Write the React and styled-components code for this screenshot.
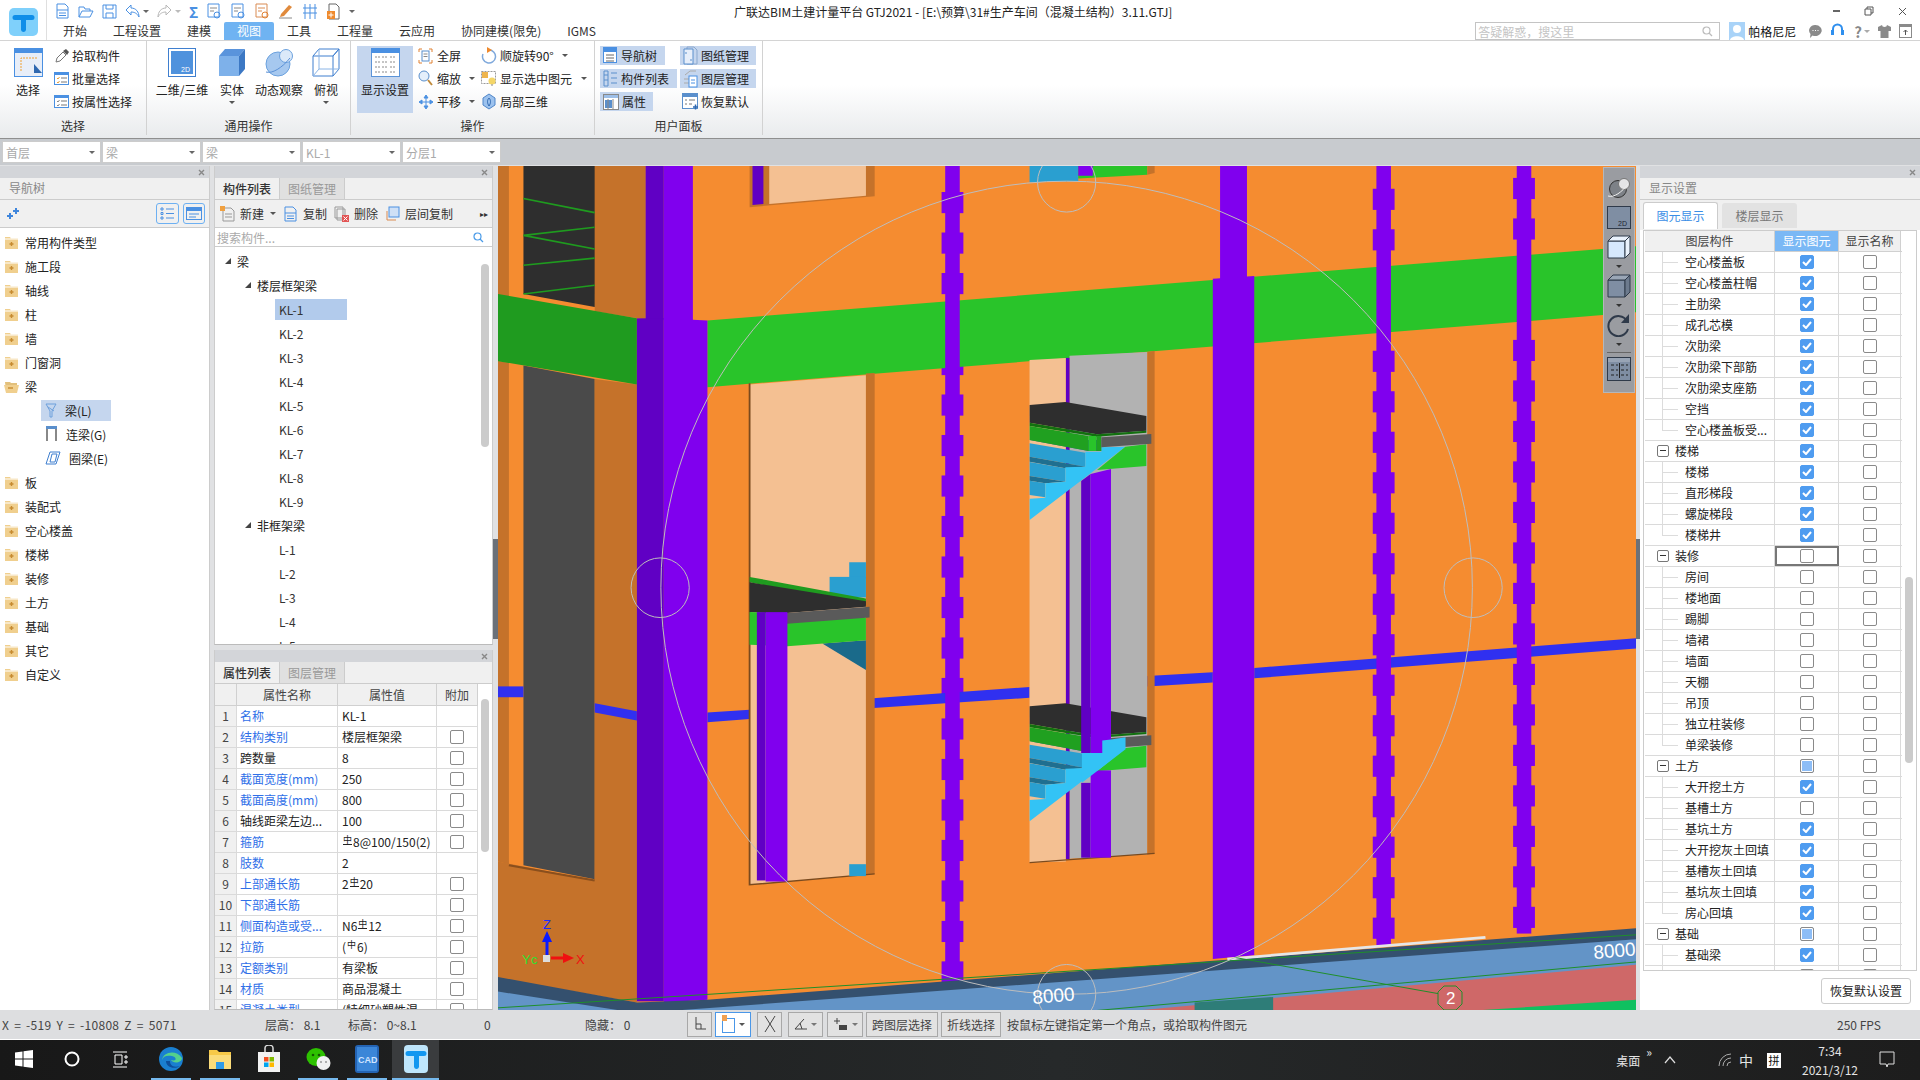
import React from 'react'
import styled, { createGlobalStyle } from 'styled-components'

const Global = createGlobalStyle`
    html, body { margin: 0; padding: 0; width: 1920px; height: 1080px; overflow: hidden; }
    body { font-family: "Noto Sans CJK SC", "Liberation Sans", sans-serif; font-size: 12px; color: #222; }
    * { box-sizing: border-box; }
`

const Page = styled.div`
    width: 1920px;
    height: 1080px;
    display: flex;
    flex-direction: column;
    background: #e0e1e3;
    overflow: hidden;
`

/* ---------- header ---------- */
const Header = styled.div`
    height: 41px;
    flex: none;
    display: flex;
    background: #fff;
    border-bottom: 1px solid #d4d4d4;
`
const LogoCell = styled.div`
    width: 47px;
    flex: none;
    padding: 8px 0 0 9px;
    border-right: 1px solid #dfdfdf;
`
const HeadRight = styled.div`
    flex: 1;
    display: flex;
    flex-direction: column;
`
const TitleRow = styled.div`
    height: 22px;
    display: grid;
    grid-template-columns: 687px auto 1fr;
    align-items: center;
`
const Quick = styled.div`
    display: flex;
    align-items: center;
    padding-left: 8px;
    gap: 8px;
`
const Title = styled.div`
    font-size: 12px;
    color: #222;
    white-space: nowrap;
`
const WinBtns = styled.div`
    display: flex;
    justify-content: flex-end;
    gap: 24px;
    padding-right: 13px;
    align-items: center;
    color: #555;
`
const TabRow = styled.div`
    height: 18px;
    display: flex;
    padding-left: 3px;
`
const Tab = styled.div`
    padding: 0 13px;
    line-height: 18px;
    color: ${p => (p.$on ? '#fff' : '#333')};
    background: ${p => (p.$on ? '#6fb3f2' : 'transparent')};
    border-radius: 2px 2px 0 0;
    white-space: nowrap;
`
const HeadTools = styled.div`
    margin-left: auto;
    display: flex;
    align-items: center;
    gap: 8px;
    padding-right: 8px;
`
const Search = styled.div`
    width: 245px;
    height: 18px;
    border: 1px solid #c4c4c4;
    display: flex;
    align-items: center;
    justify-content: space-between;
    padding: 0 6px 0 2px;
    color: #c4c4c4;
    margin-right: 1px;
`
const UserName = styled.span`
    color: #111;
    margin: 0 4px 0 -5px;
`

/* ---------- ribbon ---------- */
const Ribbon = styled.div`
    height: 98px;
    flex: none;
    display: flex;
    background: linear-gradient(#fff 0, #fff 45%, #e9ebed 100%);
    border-bottom: 1px solid #8f8f8f;
`
const Group = styled.div`
    width: ${p => p.$w}px;
    flex: none;
    display: flex;
    flex-direction: column;
    margin-bottom: 3px;
    border-right: 1px solid #d2d2d2;
`
const GroupBody = styled.div`
    flex: 1;
    display: flex;
    padding: 5px 0 0 ${p => p.$pl || 0}px;
`
const GroupLabel = styled.div`
    height: 19px;
    line-height: 20px;
    text-align: center;
    color: #333;
`
const LargeBtn = styled.div`
    width: ${p => p.$w}px;
    height: 67px;
    flex: none;
    display: flex;
    flex-direction: column;
    align-items: center;
    padding-top: 2px;
    background: ${p => (p.$on ? '#c5d6ee' : 'transparent')};
    span { line-height: 16px; margin-top: 5px; white-space: nowrap; color: #222; }
`
const SmallCol = styled.div`
    width: ${p => p.$w}px;
    margin-left: ${p => p.$ml || 0}px;
    flex: none;
    display: flex;
    flex-direction: column;
    gap: 4px;
`
const SmallBtn = styled.div`
    height: 19px;
    width: ${p => (p.$w ? `${p.$w}px` : 'auto')};
    display: flex;
    align-items: center;
    gap: 3px;
    white-space: nowrap;
    padding-left: ${p => p.$pl || 0}px;
    background: ${p => (p.$on ? '#c5d6ee' : 'transparent')};
`
const Caret = styled.i`
    display: inline-block;
    flex: none;
    width: 0;
    height: 0;
    margin-left: ${p => p.$ml || 0}px;
    border-left: 3px solid transparent;
    border-right: 3px solid transparent;
    border-top: 3px solid ${p => p.$c || '#555'};
`
const LargeCaret = styled(Caret)`
    margin-top: 3px;
`

/* ---------- selector bar ---------- */
const DropBar = styled.div`
    height: 26px;
    flex: none;
    display: flex;
    gap: 1px;
    padding: 2px 0 0 2px;
    background: #c8cbcf;
`
const Drop = styled.div`
    width: 99px;
    height: 22px;
    background: #fff;
    border: 1px solid #ccc;
    color: #aaa;
    display: flex;
    align-items: center;
    justify-content: space-between;
    padding: 0 5px 0 3px;
    font-size: 12px;
`

/* ---------- main ---------- */
const Main = styled.div`
    height: 845px;
    flex: none;
    display: flex;
    padding-top: 1px;
    background: #e0e1e3;
`
const NavPanel = styled.div`
    width: 210px;
    margin-right: 4px;
    flex: none;
    display: flex;
    flex-direction: column;
    background: #fff;
    border-right: 1px solid #ccc;
`
const MidCol = styled.div`
    width: 279px;
    flex: none;
    display: flex;
    flex-direction: column;
    gap: 5px;
`
const Panel = styled.div`
    height: ${p => p.$h}px;
    flex: none;
    display: flex;
    flex-direction: column;
    background: #fff;
    position: relative;
    overflow: hidden;
    border-bottom: 1px solid #bbb;
    border-right: 1px solid #ccc;
    border-left: 1px solid #ccc;
`
const Strip = styled.div`
    height: 12px;
    flex: none;
    background: #d3d5d9;
    display: flex;
    justify-content: flex-end;
    align-items: center;
    padding-right: 4px;
`
const PanelTitle = styled.div`
    height: 22px;
    flex: none;
    line-height: 20px;
    padding-left: 9px;
    color: #888;
    background: #f0f0f0;
    border-bottom: 1px solid #ccc;
`
const TabsBar = styled.div`
    height: 22px;
    flex: none;
    display: flex;
    background: #f0f0f0;
    border-bottom: 1px solid #ccc;
`
const PanelTab = styled.div`
    width: 65px;
    text-align: center;
    line-height: 21px;
    font-weight: ${p => (p.$on ? 500 : 400)};
    color: ${p => (p.$on ? '#333' : '#999')};
    background: ${p => (p.$on ? '#f0f0f0' : '#e0e0e0')};
    border-right: 1px solid #ccc;
`
const Toolbar = styled.div`
    height: 28px;
    flex: none;
    display: flex;
    align-items: center;
    background: #f0f0f0;
    border-bottom: 1px solid #ccc;
    padding: 0 4px 0 ${p => p.$pl || 7}px;
    gap: ${p => p.$gap || 0}px;
`
const ToolBtn = styled.div`
    display: flex;
    align-items: center;
    gap: 5px;
    color: #333;
    white-space: nowrap;
`
const MoreArrows = styled.span`
    margin-left: auto;
    font-size: 8px;
    color: #333;
`
const NavSwitch = styled.div`
    width: 24px;
    height: 21px;
    border: 1px solid #6db0f2;
    border-radius: 3px;
    display: flex;
    align-items: center;
    justify-content: center;
    margin-left: ${p => p.$ml || 0}px;
`
const NavTree = styled.div`
    flex: 1;
    padding-top: 2px;
    overflow: hidden;
`
const NavRow = styled.div`
    height: 24px;
    display: flex;
    align-items: center;
    gap: 6px;
    padding-left: 4px;
    color: #222;
`
const NavChild = styled.div`
    height: 24px;
    display: flex;
    align-items: center;
    margin-left: 41px;
`
const NavChildInner = styled.div`
    height: 21px;
    width: 70px;
    display: flex;
    align-items: center;
    gap: 8px;
    padding-left: 4px;
    color: #222;
    background: ${p => (p.$on ? '#c5d6ee' : 'transparent')};
`
const SearchRow = styled.div`
    height: 19px;
    flex: none;
    display: flex;
    align-items: center;
    justify-content: space-between;
    padding: 0 8px 0 2px;
    border-bottom: 1px solid #ccc;
    color: #aaa;
`
const CompTree = styled.div`
    flex: 1;
    padding-top: 2px;
    overflow: hidden;
`
const CompRow = styled.div`
    height: 24px;
    display: flex;
    align-items: center;
    padding-left: ${p => p.$pl}px;
    color: #222;
`
const LeafLabel = styled.div`
    width: 72px;
    height: 21px;
    line-height: 21px;
    padding-left: 4px;
    font-size: 12px;
    color: #333;
    background: ${p => (p.$on ? '#b2cbec' : 'transparent')};
`
const TreeArrow = styled.i`
    width: 0;
    height: 0;
    margin-right: 6px;
    border-bottom: 6px solid #444;
    border-left: 6px solid transparent;
`
const ScrollThumb = styled.div`
    position: absolute;
    right: ${p => p.$r}px;
    top: ${p => p.$t}px;
    width: 8px;
    height: ${p => p.$h}px;
    background: #cbcbcb;
    border-radius: 4px;
`
const Splitter = styled.div`
    width: ${p => p.$w}px;
    flex: none;
    padding-top: 373px;
`
const SplitHandle = styled.div`
    height: 100px;
    background: #6b7179;
`

/* ---------- attribute table ---------- */
const AttrHead = styled.div`
    display: grid;
    grid-template-columns: 22px 101px 99px 41px;
    height: 22px;
    width: 263px;
    flex: none;
    background: #f0f0f0;
    border-bottom: 1px solid #d0d0d0;
    div { text-align: center; line-height: 21px; border-right: 1px solid #d0d0d0; color: #444; }
`
const AttrRow = styled.div`
    display: grid;
    grid-template-columns: 22px 101px 99px 41px;
    height: 21px;
    width: 263px;
    flex: none;
    border-bottom: 1px solid #dadada;
`
const NumCell = styled.div`
    background: #f0f0f0;
    border-right: 1px solid #dadada;
    text-align: center;
    line-height: 20px;
    color: #444;
`
const NameCell = styled.div`
    border-right: 1px solid #dadada;
    padding-left: 3px;
    line-height: 20px;
    white-space: nowrap;
    overflow: hidden;
    color: ${p => (p.$blue ? '#2f6fe8' : '#222')};
`
const ValueCell = styled.div`
    border-right: 1px solid #dadada;
    padding-left: 4px;
    line-height: 20px;
    white-space: nowrap;
    overflow: hidden;
    color: #222;
`
const CheckCell = styled.div`
    border-right: 1px solid #dadada;
    display: flex;
    align-items: center;
    justify-content: center;
`
const Rebar = styled.span`
    display: inline-block;
    font-size: 9px;
    line-height: 9px;
    vertical-align: 4px;
    margin: 0 1px;
    border-bottom: ${p => (p.$plain ? '0' : '1px solid #222')};
`
const Box = styled.div`
    width: 14px;
    height: 14px;
    border: 1px solid ${p => (p.$state === 1 ? '#4f9cf0' : '#8a8a8a')};
    border-radius: 2px;
    background: ${p => (p.$state === 1 ? '#4f9cf0' : p.$state === 2 ? '#8dbdf6' : '#fff')};
    box-shadow: ${p => (p.$state === 2 ? 'inset 0 0 0 1px #fff' : 'none')};
    display: flex;
    align-items: center;
    justify-content: center;
`

/* ---------- viewport ---------- */
const Viewport = styled.div`
    width: 1138px;
    flex: none;
    position: relative;
    overflow: hidden;
    background: #f58c30;
`
const SceneSvg = styled.svg`
    display: block;
    width: 100%;
    height: 100%;
`
const SceneLabels = styled.svg`
    position: absolute;
    inset: 0;
    width: 100%;
    height: 100%;
    font-family: "Liberation Sans", sans-serif;
`
const FloatBar = styled.div`
    position: absolute;
    top: 1px;
    right: 1px;
    width: 32px;
    height: 226px;
    background: #9a9ca1;
    border: 1px solid #b5b7ba;
    display: flex;
    flex-direction: column;
    align-items: center;
    padding-top: 10px;
`
const FloatCaret = styled(Caret)`
    margin: 6px 0;
`
const FloatGap = styled.div`
    height: ${p => p.$h}px;
    flex: none;
`
const FloatRule = styled.div`
    width: 24px;
    height: 1px;
    background: #666;
    margin: 0 0 4px;
`

/* ---------- display settings panel ---------- */
const RightPanel = styled.div`
    width: 280px;
    flex: none;
    display: flex;
    flex-direction: column;
    background: #fff;
`
const RightTabs = styled.div`
    height: 30px;
    flex: none;
    display: flex;
    align-items: flex-end;
    gap: 4px;
    padding: 0 0 1px 3px;
    background: #f0f0f0;
`
const RightTab = styled.div`
    width: 75px;
    height: ${p => (p.$on ? 27 : 25)}px;
    margin-bottom: ${p => (p.$on ? 0 : 1)}px;
    line-height: 25px;
    text-align: center;
    border-radius: 3px 3px 0 0;
    color: ${p => (p.$on ? '#3a8ee6' : '#777')};
    background: ${p => (p.$on ? '#fff' : '#e2e2e2')};
    border: ${p => (p.$on ? '1px solid #ccc' : '0')};
    border-bottom: 0;
`
const LayerTable = styled.div`
    height: 741px;
    flex: none;
    margin: 0 3px;
    border: 1px solid #ccc;
    overflow: hidden;
    position: relative;
    background: #fff;
`
const LayerHead = styled.div`
    display: grid;
    grid-template-columns: 130px 64px 62px;
    height: 21px;
    margin-left: 1px;
    width: 257px;
    border-bottom: 1px solid #d0d0d0;
`
const HeadCell = styled.div`
    text-align: center;
    line-height: 20px;
    color: ${p => (p.$on ? '#fff' : '#444')};
    background: ${p => (p.$on ? '#7ab8f5' : '#f0f0f0')};
    border-right: 1px solid #d0d0d0;
`
const LayerRow = styled.div`
    display: grid;
    grid-template-columns: 130px 64px 62px;
    height: 21px;
    margin-left: 1px;
    width: 257px;
    border-bottom: 1px solid #dadada;
`
const LayerName = styled.div`
    position: relative;
    border-right: 1px solid #dadada;
    line-height: 20px;
    padding-left: ${p => (p.$group ? 30 : 40)}px;
    white-space: nowrap;
    color: #222;
    &::before {
        content: '';
        position: absolute;
        left: 17px;
        top: 0;
        bottom: ${p => (p.$last ? '10px' : '-1px')};
        border-left: 1px solid #dcdcdc;
        display: ${p => (p.$group ? 'none' : 'block')};
    }
    &::after {
        content: '';
        position: absolute;
        left: 17px;
        width: 16px;
        top: 10px;
        border-top: 1px solid #dcdcdc;
        display: ${p => (p.$group ? 'none' : 'block')};
    }
`
const Collapse = styled.i`
    position: absolute;
    left: 12px;
    top: 4px;
    width: 12px;
    height: 12px;
    border: 1px solid #777;
    border-radius: 2px;
    font-style: normal;
    &::after {
        content: '';
        position: absolute;
        left: 2px;
        right: 2px;
        top: 4px;
        border-top: 1px solid #333;
    }
`
const LayerCheck = styled.div`
    border-right: 1px solid #dadada;
    display: flex;
    align-items: center;
    justify-content: center;
    outline: ${p => (p.$focus ? '2px solid #777' : '0')};
    outline-offset: -2px;
`
const PanelFoot = styled.div`
    flex: 1;
    display: flex;
    justify-content: flex-end;
    padding: 7px 9px 0 0;
`
const ResetBtn = styled.div`
    width: 90px;
    height: 26px;
    border: 1px solid #ccc;
    border-radius: 3px;
    text-align: center;
    line-height: 24px;
    color: #222;
`

/* ---------- status + taskbar ---------- */
const StatusBar = styled.div`
    height: 30px;
    flex: none;
    display: flex;
    align-items: center;
    background: #dddee0;
    border-bottom: 1px solid #fff;
    color: #444;
    padding-bottom: 1px;
`
const StatusText = styled.div`
    width: ${p => p.$w}px;
    flex: none;
    padding-left: ${p => p.$pl || 0}px;
    white-space: nowrap;
`
const CoordText = styled(StatusText)`
    word-spacing: 2px;
    letter-spacing: .3px;
`
const StatusBtn = styled.div`
    width: ${p => p.$w}px;
    height: 25px;
    flex: none;
    margin-right: ${p => p.$mr ?? 3}px;
    background: ${p => (p.$on ? '#fff' : '#e2e2e2')};
    border: 1px solid ${p => (p.$on ? '#4a97e8' : '#a8a8a8')};
    display: flex;
    align-items: center;
    justify-content: center;
    gap: 3px;
    color: #444;
`
const Taskbar = styled.div`
    height: 40px;
    flex: none;
    display: flex;
    align-items: center;
    background: linear-gradient(90deg, #181818, #26292a 55%, #1d1d1d);
    color: #e4e4e4;
`
const TaskItem = styled.div`
    width: ${p => p.$w}px;
    height: 40px;
    flex: none;
    margin-left: ${p => p.$ml || 0}px;
    display: flex;
    align-items: center;
    justify-content: center;
    background: ${p => (p.$on ? '#3a3c3e' : 'transparent')};
    border-bottom: 2px solid ${p => (p.$run ? '#76b9ed' : 'transparent')};
`
const Tray = styled.div`
    margin-left: auto;
    display: flex;
    align-items: center;
    color: #e4e4e4;
`
const TrayText = styled.span`
    margin-right: ${p => p.$mr || 0}px;
    margin-left: ${p => p.$ml || 0}px;
    margin-top: ${p => p.$mt || 0}px;
    font-size: ${p => p.$fs || 12}px;
    white-space: nowrap;
`
const TraySpace = styled.div`
    width: ${p => p.$w}px;
    flex: none;
`
const PinYin = styled.span`
    background: #fff;
    color: #111;
    width: 14px;
    height: 15px;
    line-height: 15px;
    text-align: center;
    margin-right: 18px;
    font-size: 11px;
`
const Clock = styled.div`
    width: 62px;
    text-align: center;
    line-height: 19px;
    margin-right: 18px;
`
const Sigma = styled.span`
    color: #4a90e2;
    font-size: 15px;
    font-weight: 700;
    line-height: 15px;
`
const HelpMark = styled.span`
    color: #888;
    font-size: 15px;
    font-weight: 700;
    line-height: 15px;
    margin-left: 2px;
`
const MinBar = styled.span`
    width: 7px;
    height: 2px;
    background: #666;
`
const BtnText = styled.span`
    margin-left: ${p => p.$ml || 0}px;
`

/* ---------- icons ---------- */
const Svg = ({ w = 16, h = 16, children, vb }) => (
    <svg width={w} height={h} viewBox={vb || `0 0 ${w} ${h}`} style={{ flex: 'none', display: 'block' }} fill="none">{children}</svg>
)
const B = '#4a90e2'

const Logo = () => (
    <Svg w={29} h={28}>
        <rect width="29" height="28" rx="5" fill="#7fd0fb" />
        <path d="M6 7h17a2 2 0 0 1 0 5h-6v10a2.6 2.6 0 0 1-5 0V12H6a2.5 2.5 0 0 1 0-5z" fill="#0f8ee8" />
    </Svg>
)
const PageIc = ({ c = B }) => (
    <Svg w={15} h={16}><path d="M2 1h8l3 3v11H2z M2 7h11 M4 10h7 M4 12.5h7" stroke={c} /></Svg>
)
const NewIc = () => (
    <Svg w={15} h={16}><path d="M3 2h8l3 3v10H3z M5 8h7 M5 11h7" stroke="#999" /><rect x="0" y="0" width="5" height="5" fill="#f0a040" /></Svg>
)
const DeleteIc = () => (
    <Svg w={15} h={16}><path d="M1 1h8v11H1z M3 3h8v11H3z" stroke="#999" /><rect x="8" y="9" width="7" height="7" fill="#e25555" /><path d="M9.500 10.500l4 4 M13.500 10.500l-4 4" stroke="#fff" /></Svg>
)
const FolderOpenIc = () => (
    <Svg w={16} h={15}><path d="M1 13V3h5l1 2h5v2 M1 13l3-6h11l-3 6z" stroke={B} /></Svg>
)
const SaveIc = () => (
    <Svg w={15} h={15}><path d="M1 1h13v13H1z M4 1v4h7V1 M4 14V9h7v5" stroke={B} /></Svg>
)
const UndoIc = ({ flip, c = B }) => (
    <Svg w={15} h={14}><path d={flip ? 'M9 1l5 5-5 5V8C6 8 3 9 1 13 1 8 4 4 9 4z' : 'M6 1L1 6l5 5V8c3 0 6 1 8 5 0-5-3-9-8-9z'} stroke={c} /></Svg>
)
const DocTool = ({ kind }) => (
    <Svg w={16} h={17}>
        <path d="M2 1h11v13H2z" stroke={kind === 'red' ? '#d98b52' : B} />
        <path d="M4 5h7 M4 8h4" stroke={kind === 'red' ? '#d98b52' : '#888'} />
        <circle cx="11" cy="12" r="3" stroke={kind === 'red' ? '#e08030' : B} />
    </Svg>
)
const PenIc = () => (
    <Svg w={16} h={16}><path d="M3 11L11 2l3 2-8 9-4 1z" fill="#e08a3c" /><path d="M1 15h13" stroke="#888" /></Svg>
)
const GridIc = () => (
    <Svg w={16} h={17}><path d="M1 5h14 M1 10h14 M3 1v15 M8 1v15 M13 1v15" stroke={B} /></Svg>
)
const AddDocIc = () => (
    <Svg w={15} h={17}><path d="M3 1h7l3 3v12H3z" stroke="#666" /><rect x="1" y="8" width="8" height="8" fill="#ef8a2d" /><path d="M5 9.5v5 M2.5 12h5" stroke="#fff" /></Svg>
)
const SelectIc = () => (
    <Svg w={29} h={29}>
        <rect x=".5" y=".5" width="28" height="28" fill="#e8eef8" stroke={B} />
        <rect x="0" y="0" width="29" height="5" fill={B} />
        <path d="M7 23V10h16" stroke="#f0a030" strokeDasharray="2 1" />
        <path d="M20 16l8 9h-8z" fill="#2f68b0" />
    </Svg>
)
const PickIc = () => (
    <Svg w={15} h={16}><path d="M2 14l1-4 6-6 3 3-6 6z" stroke="#777" /><path d="M9 3l3-2 3 3-2 3z" fill="#555" /></Svg>
)
const ListIc = ({ c = '#e9a13a' }) => (
    <Svg w={15} h={15}>
        <rect x=".5" y="1.5" width="14" height="12" fill="#fff" stroke={B} />
        <rect x="0" y="1" width="15" height="3" fill={B} />
        <path d="M3 7l1 1 1.5-2 M3 11l1 1 1.5-2" stroke={c} />
        <path d="M7 7h6 M7 11h6" stroke="#777" />
    </Svg>
)
const TwoDIc = () => (
    <Svg w={28} h={29}>
        <rect x=".5" y=".5" width="27" height="28" fill="#fff" stroke="#3f7fcf" />
        <rect x="3" y="3" width="22" height="23" fill="#4f92dd" />
        <text x="13" y="24" fontSize="7" fill="#fff" fontFamily="Liberation Sans">2D</text>
    </Svg>
)
const SolidIc = () => (
    <Svg w={28} h={29}>
        <path d="M1 8h20v20H1z" fill="#7eb1ea" />
        <path d="M1 8l6-7h20l-6 7z" fill="#5a94dc" />
        <path d="M21 8l6-7v20l-6 7z" fill="#3c78c4" />
    </Svg>
)
const OrbitIc = () => (
    <Svg w={30} h={29}>
        <circle cx="14" cy="16" r="12" fill="#a6c8ef" stroke="#6ba1de" />
        <circle cx="22" cy="8" r="6.5" fill="#dbe9f9" stroke="#6ba1de" />
        <path d="M2 24c6 2 16-4 24-14" stroke="#5a90d6" />
    </Svg>
)
const WireIc = () => (
    <Svg w={28} h={29}>
        <path d="M1 8h20v20H1z M1 8l6-7h20l-6 7 M21 8l6-7v20l-6 7" stroke="#3f7fcf" fill="none" />
        <path d="M7 1v20h20 M7 21l-6 7" stroke="#8ab4e6" />
    </Svg>
)
const DisplayIc = () => (
    <Svg w={29} h={29}>
        <rect x=".5" y=".5" width="28" height="28" fill="#fff" stroke="#5b94d8" />
        <rect width="29" height="5" fill="#4a90e2" />
        {[9, 14, 19, 24].map(y => <path key={y} d={`M4 ${y}h5 M11 ${y}h5 M19 ${y}h6`} stroke="#8a8a8a" strokeDasharray="2 1" />)}
    </Svg>
)
const FullIc = () => (
    <Svg w={15} h={16}>
        <path d="M1 4V1h3 M11 1h3v3 M14 12v3h-3 M4 15H1v-3" stroke="#e08030" />
        <rect x="4" y="3" width="7" height="10" stroke="#5a8fcc" />
        <path d="M5.5 6h4 M5.5 8.5h4" stroke="#888" />
    </Svg>
)
const ZoomIc = () => (
    <Svg w={15} h={17}><circle cx="6" cy="6" r="5" fill="#e4effb" stroke="#5a8fcc" /><path d="M10 10l4 5" stroke="#c08a3c" strokeWidth="2" /></Svg>
)
const PanIc = () => (
    <Svg w={16} h={16}><path d="M8 1l2 3H6z M8 15l-2-3h4z M1 8l3-2v4z M15 8l-3 2V6z M8 4v8 M4 8h8" fill={B} stroke={B} /></Svg>
)
const RotateIc = () => (
    <Svg w={16} h={17}><path d="M8 3a6.5 6.5 0 1 1-6 4" stroke="#7fa9dc" strokeWidth="1.5" /><path d="M6 0l5 3-5 3z" fill="#ef8a2d" /></Svg>
)
const ShowSelIc = () => (
    <Svg w={16} h={16}><rect x=".5" y=".5" width="14" height="12" stroke="#999" strokeDasharray="2 1" /><rect x="1" y="1" width="6" height="6" fill="#eeb54e" /><circle cx="11" cy="10" r="3.5" fill="#f4d668" /><path d="M10 14h2" stroke="#888" /></Svg>
)
const LocalIc = () => (
    <Svg w={16} h={17}><path d="M8 1l6 4v7l-6 4-6-4V5z" fill="#9cc2ee" stroke="#4f86c9" /><path d="M8 5c2 2 2 5 0 8-2-3-2-6 0-8z" stroke="#2f68b0" /></Svg>
)
const NavTreeIc = () => (
    <Svg w={15} h={17}><rect x=".5" y=".5" width="13" height="15" fill="#fff" stroke={B} /><rect width="14" height="5" fill={B} /><path d="M3 8h8 M3 11h8 M3 14h8" stroke="#666" /></Svg>
)
const CompListIc = () => (
    <Svg w={15} h={17}><path d="M1 1h4v15H1z M8 3h6 M8 8h6 M8 13h6" stroke="#5a8fcc" /><path d="M1 5h4 M1 10h4" stroke="#5a8fcc" /></Svg>
)
const PropIc = () => (
    <Svg w={16} h={16}><rect x=".5" y=".5" width="15" height="15" fill="#fff" stroke="#888" /><rect x="1" y="1" width="14" height="3" fill="#9dbfe8" /><rect x="2" y="6" width="7" height="8" fill="#5a8fcc" /><path d="M10 5v10 M5 5v10" stroke="#888" /></Svg>
)
const DrawMgrIc = () => (
    <Svg w={15} h={19}><path d="M4 3V1h7l3 3v14H4" stroke="#8aa8cf" /><path d="M1 3h9v15H1z" stroke="#5a8fcc" fill="#e6eefa" /><path d="M3 6v2 M8 15v-2" stroke="#5a8fcc" /></Svg>
)
const LayerMgrIc = () => (
    <Svg w={15} h={19}><path d="M2 6l5-4h6M1 10h6 M1 14h5" stroke="#aaa" /><rect x="6" y="7" width="8" height="11" fill="#fff" stroke={B} /><path d="M8 11h4 M8 14h4" stroke={B} /></Svg>
)
const RestoreIc = () => (
    <Svg w={16} h={17}><rect x=".5" y=".5" width="15" height="15" fill="#fff" stroke="#5a8fcc" /><rect width="16" height="4" fill="#5a8fcc" /><path d="M3 7h2 M7 7h6 M3 11h2 M7 11h3" stroke="#777" /><path d="M11 14h5 M13.5 11.5v5" stroke="#2f68b0" strokeWidth="1.5" /></Svg>
)
const FolderIc = ({ open }) => (
    <Svg w={15} h={13}>
        {open ? (
            <>
                <path d="M1 2h5l1 1h6v8H2z" fill="#e2c07c" />
                <path d="M0 5h15l-2 8H2z" fill="#f0cf8e" />
                <path d="M4 8h5" stroke="#c68a30" strokeWidth="1.4" />
            </>
        ) : (
            <>
                <path d="M1 1h5l1 1.5h7V13H1z" fill="#f0cf8e" />
                <path d="M1 3h13" stroke="#fff" />
                <path d="M7.5 6v4 M5.5 8h4" stroke="#c68a30" strokeWidth="1.4" />
            </>
        )}
    </Svg>
)
const FunnelIc = () => (
    <Svg w={12} h={15}><path d="M1 1h10L7 8v6H5V8z M3 4l6 4" stroke="#6da0dc" /></Svg>
)
const LintelIc = () => (
    <Svg w={13} h={16}><rect x="1" y="0" width="11" height="3" fill="#5a8fcc" /><path d="M2 15V3 M11 15V3" stroke="#888" strokeWidth="2" /></Svg>
)
const RingIc = () => (
    <Svg w={16} h={14}><path d="M5 1h10l-4 12H1z M7 3h5l-2 8H5z" stroke="#3f7fcf" /></Svg>
)
const XIc = ({ c = '#777' }) => (
    <Svg w={9} h={9}><path d="M1 1l7 7 M8 1L1 8" stroke={c} /></Svg>
)
const CloseSmall = () => (
    <Svg w={7} h={7}><path d="M1 1l5 5 M6 1L1 6" stroke="#888" strokeWidth="1.4" /></Svg>
)
const MagIc = ({ c = '#bbb' }) => (
    <Svg w={11} h={11}><circle cx="4.5" cy="4.5" r="3.5" stroke={c} strokeWidth="1.2" /><path d="M7 7l3 3" stroke={c} strokeWidth="1.2" /></Svg>
)
const Check = () => (
    <Svg w={10} h={8}><path d="M1 4l3 3 5-6" stroke="#fff" strokeWidth="2" /></Svg>
)

const Bubble = () => <Svg w={15} h={15}><path d="M7.5 1a6.5 5.5 0 1 1-3 10.5L2 14l.5-4A6 5.5 0 0 1 7.5 1z" fill="#8a8a8a" /><path d="M4.5 6.5h1 M7 6.5h1 M9.5 6.5h1" stroke="#fff" /></Svg>
const Headset = () => <Svg w={13} h={16}><path d="M2 8V6a4.5 4.5 0 0 1 9 0v6" stroke="#2f8fee" strokeWidth="2" /><rect x="0" y="7" width="3" height="5" fill="#2f8fee" /><rect x="10" y="7" width="3" height="5" fill="#2f8fee" /></Svg>
const Shirt = () => <Svg w={13} h={15}><path d="M4 1L0 3v4h2.5v7h8V7H13V3L9 1a2.5 2 0 0 1-5 0z" fill="#8a8a8a" /></Svg>
const WinUp = () => <Svg w={13} h={14}><rect x=".5" y=".5" width="12" height="13" stroke="#8a8a8a" /><rect width="13" height="3" fill="#8a8a8a" /><path d="M6.5 11V6 M4.5 8l2-2 2 2" stroke="#555" /></Svg>
const Avatar = () => <Svg w={16} h={18}><rect width="16" height="18" fill="#a9d3f8" /><circle cx="8" cy="7" r="4" fill="#fff" /><path d="M1 18c1-5 13-5 14 0z" fill="#fff" /></Svg>

/* scene: coordinates read off a 1568 x 1568 grid of the 3d view */
const Purple = '#8000ee'
const DarkPurple = '#6000c4'
const Peach = '#f4c092'
const DarkOrange = '#c5722a'
const Green = '#29c42a'

const bumpsFor = (start, end, skipFrom, skipTo) => {
    const out = []
    for (let y = start; y < end - 30; y += 74.7) {
        if (y + 38 < skipFrom || y > skipTo) out.push(y)
    }
    return out
}

const KnuckleBumps = ({ x, end, start, skipFrom, skipTo }) => (
    <g fill={Purple}>
        {bumpsFor(start, end, skipFrom, skipTo).map(y => <rect key={y} x={x - 15} y={y} width="30" height="39" />)}
    </g>
)

const Stair = () => (
    <g transform="translate(591.5 322.9) scale(.4585 .615)">
        <polygon points="298,195 405,186 648,228 648,272 500,283 298,248" fill="#2e2e2e" />
        <polygon points="298,248 500,283 648,272 648,278 500,290 298,258" fill="#12700f" />
        <polygon points="298,300 475,333 513,333 513,300 298,300" fill="#1f6f90" />
        <polygon points="298,310 465,338 465,380 298,350" fill="#2a9fd0" />
        <polygon points="298,350 465,380 405,385 298,365" fill="#1f6f90" />
        <polygon points="298,366 405,385 405,425 298,408" fill="#2a9fd0" />
        <polygon points="298,408 405,425 345,430 298,422" fill="#1f6f90" />
        <polygon points="298,422 345,430 345,472 298,465" fill="#2a9fd0" />
        <polygon points="298,540 585,320 513,322 513,335 465,335 465,380 405,382 405,425 345,430 345,473 298,476" fill="#33c3f5" />
        <polygon points="585,320 648,313 648,378 500,390" fill={Green} />
        <polygon points="298,258 475,288 475,333 298,300" fill="#20a020" />
        <rect x="475" y="288" width="23" height="45" fill={Green} />
        <rect x="498" y="288" width="15" height="45" fill="#20a020" />
        <polygon points="513,292 663,282 663,311 513,322" fill="#5a5a5a" />
    </g>
)

const Scene = () => (
    <SceneSvg viewBox="-3 2 1565 1557" preserveAspectRatio="none">
        <rect x="-3" y="0" width="1570" height="1570" fill="#f58c30" />
        {/* left return wall */}
        <rect x="-3" y="0" width="15" height="300" fill={DarkOrange} />
        <polygon points="130,0 200,0 200,285 130,270" fill={DarkOrange} />
        <polygon points="32,0 130,0 130,262 32,238" fill="#2e2e2e" />
        <path d="M32,62L130,88 M32,130L130,115 M32,130L130,155 M32,185L130,172 M32,238L130,222" stroke="#1f9b1f" strokeWidth="3" />
        <polygon points="-3,362 12,365 12,1290 -3,1285" fill={DarkOrange} />
        <polygon points="32,370 130,395 130,1318 32,1292" fill="#4a4a4a" />
        <polygon points="130,395 188,405 188,1545 -3,1500 -3,1285 130,1320" fill={DarkOrange} />
        <path d="M12,1292L130,1320" stroke="#8a4f1d" strokeWidth="4" />
        <polygon points="-3,238 188,283 188,405 -3,362" fill="#1f9b1f" />
        <polygon points="-3,962 32,962 32,982 -3,982" fill="#3030f0" />
        <polygon points="130,993 188,1008 188,1025 130,1010" fill="#3030f0" />

        {/* window top */}
        <polygon points="343,0 515,0 515,58 343,78" fill={DarkOrange} />
        <polygon points="370,0 503,0 503,57 370,72" fill={Peach} />
        <polygon points="347,0 362,0 362,72 347,74" fill={DarkPurple} />
        <polygon points="728,0 795,0 795,30 728,32" fill="#2a9fd0" />
        <polygon points="795,0 890,0 890,18 795,25" fill={Green} />
        <rect x="795" y="0" width="20" height="20" fill={Purple} />
        <polygon points="890,0 900,0 900,15 890,18" fill={DarkOrange} />

        {/* pilaster knuckles go under the beam */}
        <KnuckleBumps x={622} end={1503} start={50} skipFrom={240} skipTo={340} />
        <KnuckleBumps x={1215} end={1440} start={44} skipFrom={180} skipTo={300} />
        <KnuckleBumps x={1408} end={1418} start={24} skipFrom={160} skipTo={280} />

        {/* green beam and blue stripe */}
        <polygon points="285,287 1562,150 1562,272 285,410" fill={Green} />
        <polygon points="285,1010 343,1005 343,1022 285,1028" fill="#3030f0" />
        <polygon points="503,985 728,963 728,983 503,1003" fill="#3030f0" />
        <polygon points="890,943 980,936 980,955 890,962" fill="#3030f0" />
        <polygon points="1037,928 1565,873 1565,892 1037,947" fill="#3030f0" />

        {/* opening with lower stair */}
        <polygon points="343,405 503,388 503,1310 343,1328" fill={Peach} />
        <polygon points="503,385 515,384 515,1308 503,1310" fill={DarkOrange} />
        <path d="M343,403V1328L515,1308" stroke="#7a4a1e" strokeWidth="2.5" fill="none" />
        <rect x="480" y="733" width="23" height="30" fill="#2a9fd0" />
        <rect x="453" y="760" width="50" height="38" fill="#2a9fd0" />
        <rect x="480" y="1290" width="23" height="22" fill="#2a9fd0" />
        <polygon points="443,883 503,877 503,932" fill="#1a6a8a" />
        <polygon points="343,760 503,800 503,812 343,770" fill="#1f9b1f" />
        <polygon points="343,770 503,805 503,815 381,828 343,825" fill="#2e2e2e" />
        <polygon points="343,825 503,835 503,877 395,888 343,885" fill={Green} />
        <polygon points="381,828 508,815 508,835 381,848" fill="#5a5a5a" />
        <rect x="353" y="825" width="12" height="495" fill={DarkPurple} />
        <rect x="365" y="825" width="30" height="497" fill={Purple} />

        {/* opening with two flights */}
        <polygon points="728,360 778,356 778,1285 728,1287" fill={Peach} />
        <polygon points="783,352 890,345 890,1272 783,1280" fill="#b2b2b2" />
        <rect x="778" y="356" width="5" height="925" fill={DarkPurple} />
        <polygon points="890,345 900,343 900,1270 890,1272" fill={DarkOrange} />
        <path d="M728,1287L900,1270" stroke="#7a4a1e" strokeWidth="2.5" />
        <Stair />
        <g transform="translate(0,556)"><Stair /></g>
        <polygon points="799,583 812,570 812,1085 799,1085" fill={DarkPurple} />
        <polygon points="812,570 840,561 840,1085 812,1085" fill={Purple} />
        <rect x="799" y="1140" width="13" height="138" fill={DarkPurple} />
        <rect x="812" y="1117" width="28" height="161" fill={Purple} />
        <polygon points="840,1060 860,1056 860,1078 800,1140 800,1085 828,1085 828,1062" fill="#33c3f5" />

        {/* columns */}
        <rect x="200" y="0" width="25" height="285" fill={DarkPurple} />
        <rect x="225" y="0" width="40" height="287" fill={Purple} />
        <rect x="188" y="283" width="37" height="1260" fill={DarkPurple} />
        <polygon points="225,283 285,287 285,1540 225,1545" fill={Purple} />
        <rect x="612" y="0" width="20" height="1503" fill={Purple} />
        <rect x="1205" y="0" width="20" height="1440" fill={Purple} />
        <rect x="1398" y="0" width="20" height="1418" fill={Purple} />
        <rect x="990" y="0" width="37" height="215" fill={Purple} />
        <polygon points="980,210 1037,205 1037,1458 980,1465" fill={Purple} />

        {/* ground */}
        <polygon points="-3,1498 188,1545 285,1540 1565,1408 1565,1568 -3,1568" fill="#34506e" />
        <polygon points="-3,1525 190,1565 1565,1428 1565,1568 -3,1568" fill="#6394c7" />
        <polygon points="810,1568 1565,1475 1565,1568" fill="#cf6868" />
        <polygon points="955,1545 1063,1535 1063,1568 955,1568" fill="#2e7d78" />
        <polygon points="1250,1568 1565,1540 1565,1568" fill="#10c060" />
        <path d="M1000,1465L1355,1425" stroke="#e6e6e6" strokeWidth="5" />
        <path d="M1010,1462L1295,1530 M-3,1555L1565,1420 M820,1560L1565,1470" stroke="#1f8f2a" vectorEffect="non-scaling-stroke" />

        {/* orbit gizmo */}
        <g fill="none" stroke="#bdbdbd">
            <ellipse cx="779" cy="780" rx="558" ry="750" vectorEffect="non-scaling-stroke" />
            <ellipse cx="220" cy="780" rx="40" ry="55" vectorEffect="non-scaling-stroke" />
            <ellipse cx="1338" cy="780" rx="40" ry="55" vectorEffect="non-scaling-stroke" />
            <ellipse cx="779" cy="32" rx="40" ry="55" vectorEffect="non-scaling-stroke" />
            <ellipse cx="779" cy="1530" rx="40" ry="55" vectorEffect="non-scaling-stroke" />
        </g>
    </SceneSvg>
)

const Overlay = () => (
    <SceneLabels viewBox="0 0 1138 844">
        {/* axis triad */}
        <path d="M49 774V790" stroke="#0a1aff" strokeWidth="3" />
        <polygon points="49,765 44,776 54,776" fill="#0a1aff" />
        <path d="M53 792H66" stroke="#f01010" strokeWidth="3" />
        <polygon points="76,792 65,787 65,797" fill="#f01010" />
        <rect x="45" y="789" width="7" height="7" fill="#ddd" />
        <text x="45" y="763" fontSize="13" fill="#1a2aff">Z</text>
        <text x="24" y="798" fontSize="13" fill="#30e030">Y</text>
        <text x="33" y="798" fontSize="13" fill="#30e030">c</text>
        <text x="78" y="798" fontSize="13" fill="#f01010">X</text>
        <text x="1096" y="793" fontSize="19" fill="#fff" transform="rotate(-5 1096 793)">8000</text>
        <text x="535" y="838" fontSize="19" fill="#fff" transform="rotate(-5 535 838)">8000</text>
        <polygon points="946,820 958,820 964,826 964,838 958,844 946,844 940,838 940,826" fill="#cf6868" stroke="#1f8f2a" />
        <text x="948" y="838" fontSize="17" fill="#fff">2</text>
    </SceneLabels>
)

const FloatTools = () => (
    <FloatBar>
        <Svg w={24} h={20}>
            <circle cx="11" cy="11" r="8.500" fill="#7d8187" stroke="#333" />
            <circle cx="17" cy="6" r="5.500" fill="#e4e4e6" stroke="#777" />
            <path d="M1 18c6 2 14-4 20-12" stroke="#eee" />
        </Svg>
        <FloatGap $h={8} />
        <Svg w={24} h={23}>
            <rect x=".5" y=".5" width="23" height="22" fill="#7f8ea3" stroke="#2f3a4a" />
            <text x="11" y="20" fontSize="7" fill="#1c2530" fontFamily="Liberation Sans">2D</text>
        </Svg>
        <FloatGap $h={6} />
        <Svg w={24} h={24}>
            <path d="M1 6h17v17H1z" fill="#d6e8fd" stroke="#2f3a4a" />
            <path d="M1 6l5-5h17l-5 5z" fill="#eaf2fc" stroke="#2f3a4a" />
            <path d="M18 6l5-5v17l-5 5z" fill="#eaf2fc" stroke="#2f3a4a" />
        </Svg>
        <FloatCaret $c="#333" />
        <Svg w={24} h={24}>
            <path d="M1 6h17v17H1z" fill="#7f8ea3" stroke="#2f3a4a" />
            <path d="M1 6l5-5h17l-5 5z" fill="#9aa6b6" stroke="#2f3a4a" />
            <path d="M18 6l5-5v17l-5 5z" fill="#6c7a8d" stroke="#2f3a4a" />
        </Svg>
        <FloatCaret $c="#333" />
        <Svg w={24} h={24}>
            <path d="M20 8a10 10 0 1 0 1 8" stroke="#2f3a4a" strokeWidth="2" />
            <path d="M22 1v9h-8z" fill="#2f3a4a" />
        </Svg>
        <FloatCaret $c="#333" />
        <FloatRule />
        <Svg w={24} h={24}>
            <rect x=".5" y=".5" width="23" height="23" fill="#7f8ea3" stroke="#2f3a4a" />
            <rect x="1" y="1" width="22" height="4" fill="#98a4b5" />
            <path d="M4 8h3 M9 8h2 M14 8h3 M19 8h2 M4 13h3 M9 13h2 M14 13h3 M19 13h2 M4 18h3 M9 18h2 M14 18h3 M19 18h2 M12.5 6v15" stroke="#222" />
        </Svg>
    </FloatBar>
)

/* ---------- data ---------- */
const tabs = ['开始', '工程设置', '建模', '视图', '工具', '工程量', '云应用', '协同建模(限免)', 'IGMS']
const navItems = ['常用构件类型', '施工段', '轴线', '柱', '墙', '门窗洞']
const navItems2 = ['板', '装配式', '空心楼盖', '楼梯', '装修', '土方', '基础', '其它', '自定义']
const klRows = ['KL-1', 'KL-2', 'KL-3', 'KL-4', 'KL-5', 'KL-6', 'KL-7', 'KL-8', 'KL-9']

const attrs = [
    { n: '名称', v: 'KL-1', blue: 1, none: 1 },
    { n: '结构类别', v: '楼层框架梁', blue: 1 },
    { n: '跨数量', v: '8' },
    { n: '截面宽度(mm)', v: '250', blue: 1 },
    { n: '截面高度(mm)', v: '800', blue: 1 },
    { n: '轴线距梁左边...', v: '100' },
    { n: '箍筋', v: <><Rebar>中</Rebar>8@100/150(2)</>, blue: 1 },
    { n: '肢数', v: '2', blue: 1, none: 1 },
    { n: '上部通长筋', v: <>2<Rebar>中</Rebar>20</>, blue: 1 },
    { n: '下部通长筋', v: '', blue: 1 },
    { n: '侧面构造或受...', v: <>N6<Rebar>中</Rebar>12</>, blue: 1 },
    { n: '拉筋', v: <>(<Rebar $plain>中</Rebar>6)</>, blue: 1 },
    { n: '定额类别', v: '有梁板', blue: 1 },
    { n: '材质', v: '商品混凝土', blue: 1 },
    { n: '混凝土类型', v: '(特细砂塑性混', blue: 1 },
]

const leaf = (t, c, last) => ({ t, c, last })
const layers = [
    leaf('空心楼盖板', 1), leaf('空心楼盖柱帽', 1), leaf('主肋梁', 1), leaf('成孔芯模', 1), leaf('次肋梁', 1),
    leaf('次肋梁下部筋', 1), leaf('次肋梁支座筋', 1), leaf('空挡', 1), leaf('空心楼盖板受...', 1, 1),
    { t: '楼梯', c: 1, g: 1 },
    leaf('楼梯', 1), leaf('直形梯段', 1), leaf('螺旋梯段', 1), leaf('楼梯井', 1, 1),
    { t: '装修', c: 0, g: 1, focus: 1 },
    leaf('房间', 0), leaf('楼地面', 0), leaf('踢脚', 0), leaf('墙裙', 0), leaf('墙面', 0), leaf('天棚', 0),
    leaf('吊顶', 0), leaf('独立柱装修', 0), leaf('单梁装修', 0, 1),
    { t: '土方', c: 2, g: 1 },
    leaf('大开挖土方', 1), leaf('基槽土方', 0), leaf('基坑土方', 1), leaf('大开挖灰土回填', 1),
    leaf('基槽灰土回填', 1), leaf('基坑灰土回填', 1), leaf('房心回填', 1, 1),
    { t: '基础', c: 2, g: 1 },
    leaf('基础梁', 1), leaf('', 0),
]

const CheckBox = ({ state = 0 }) => <Box $state={state}>{state === 1 && <Check />}</Box>

const TaskIcons = {
    win: <Svg w={18} h={18}><path d="M0 2.5L7.5 1.500v7H0z M8.500 1.300L18 0v8.500H8.500z M0 9.500h7.500v7L0 15.500z M8.500 9.500H18V18l-9.500-1.300z" fill="#fff" /></Svg>,
    circle: <Svg w={16} h={16}><circle cx="8" cy="8" r="6.500" stroke="#fff" strokeWidth="2" /></Svg>,
    view: <Svg w={16} h={17}><path d="M1 1h14 M1 16h14 M3 4h7v9H3z M13 5h2v2h-2z M13 10h2v2h-2z" stroke="#fff" /></Svg>,
    edge: <Svg w={26} h={26}><circle cx="13" cy="13" r="12" fill="#1a7fd0" /><path d="M4 14C5 6 18 3 24 12c0 5-9 6-11 2 6 2 6-3 1-4-5-1-9 0-10 4z" fill="#54d08c" /><path d="M8 15c0 6 8 9 14 5-7 2-10-1-10-5z" fill="#0d4f9c" /></Svg>,
    folder: <Svg w={24} h={24}><path d="M1 3h8l2 2h12v17H1z" fill="#f7c948" /><rect x="1" y="8" width="22" height="14" fill="#fbdc7a" /><path d="M8 22v-7h8v7z" fill="#2f9be8" /></Svg>,
    store: <Svg w={24} h={28}><rect x="1" y="7" width="22" height="20" fill="#f2f2f2" /><path d="M8 7V3a4 3 0 0 1 8 0v4" stroke="#ddd" strokeWidth="1.500" /><rect x="7" y="12" width="4.500" height="4.500" fill="#f25022" /><rect x="12.500" y="12" width="4.500" height="4.500" fill="#7fba00" /><rect x="7" y="17.500" width="4.500" height="4.500" fill="#00a4ef" /><rect x="12.500" y="17.500" width="4.500" height="4.500" fill="#ffb900" /></Svg>,
    wechat: <Svg w={25} h={25}><ellipse cx="10" cy="10" rx="9.500" ry="9" fill="#2dc100" /><ellipse cx="17.500" cy="16" rx="7" ry="7" fill="#f1f1f1" /><circle cx="7" cy="8" r="1.300" fill="#125a00" /><circle cx="13" cy="8" r="1.300" fill="#125a00" /><circle cx="15" cy="15" r="1" fill="#999" /><circle cx="20" cy="15" r="1" fill="#999" /></Svg>,
    cad: <Svg w={24} h={28}><rect width="24" height="28" rx="3" fill="#2464b4" /><rect x="2" y="2" width="20" height="24" fill="#3b86d8" /><text x="3" y="18" fontSize="9" fontFamily="Liberation Sans" fontWeight="700" fill="#cfe4ff">CAD</text></Svg>,
    t: <Svg w={24} h={28}><rect width="24" height="28" rx="4" fill="#bfe6fc" /><path d="M4 6h16a2 2 0 0 1 0 5h-5v11a2.600 2.600 0 0 1-5 0V11H4a2.500 2.500 0 0 1 0-5z" fill="#1297f0" /></Svg>,
}

const App = () => (
    <Page>
        <Global />
        <Header>
            <LogoCell><Logo /></LogoCell>
            <HeadRight>
                <TitleRow>
                    <Quick>
                        <PageIc /><FolderOpenIc /><SaveIc />
                        <UndoIc /><Caret $ml={-5} $c="#666" />
                        <UndoIc flip c="#b8b8b8" /><Caret $ml={-5} $c="#bbb" />
                        <Sigma>Σ</Sigma>
                        <DocTool /><DocTool /><DocTool kind="red" /><PenIc /><GridIc /><AddDocIc />
                        <Caret $c="#666" />
                    </Quick>
                    <Title>广联达BIM土建计量平台 GTJ2021 - [E:\预算\31#生产车间（混凝土结构）3.11.GTJ]</Title>
                    <WinBtns>
                        <MinBar />
                        <Svg w={10} h={10}><path d="M3 3V1h6v6H7 M1 3h6v6H1z" stroke="#555" /></Svg>
                        <XIc c="#555" />
                    </WinBtns>
                </TitleRow>
                <TabRow>
                    {tabs.map(t => <Tab key={t} $on={t === '视图'}>{t}</Tab>)}
                    <HeadTools>
                        <Search>答疑解惑，搜这里<MagIc /></Search>
                        <Avatar />
                        <UserName>帕格尼尼</UserName>
                        <Bubble /><Headset />
                        <HelpMark>?</HelpMark>
                        <Caret $ml={-6} $c="#aaa" />
                        <Shirt /><WinUp />
                    </HeadTools>
                </TabRow>
            </HeadRight>
        </Header>

        <Ribbon>
            <Group $w={147}>
                <GroupBody $pl={6}>
                    <LargeBtn $w={44}><SelectIc /><span>选择</span></LargeBtn>
                    <SmallCol $w={90} $ml={4}>
                        <SmallBtn><PickIc /><BtnText>拾取构件</BtnText></SmallBtn>
                        <SmallBtn><ListIc /><BtnText>批量选择</BtnText></SmallBtn>
                        <SmallBtn><ListIc c="#888" /><BtnText>按属性选择</BtnText></SmallBtn>
                    </SmallCol>
                </GroupBody>
                <GroupLabel>选择</GroupLabel>
            </Group>
            <Group $w={204}>
                <GroupBody $pl={9}>
                    <LargeBtn $w={52}><TwoDIc /><span>二维/三维</span></LargeBtn>
                    <LargeBtn $w={48}><SolidIc /><span>实体</span><LargeCaret /></LargeBtn>
                    <LargeBtn $w={46}><OrbitIc /><span>动态观察</span></LargeBtn>
                    <LargeBtn $w={48}><WireIc /><span>俯视</span><LargeCaret /></LargeBtn>
                </GroupBody>
                <GroupLabel>通用操作</GroupLabel>
            </Group>
            <Group $w={244}>
                <GroupBody $pl={6}>
                    <LargeBtn $w={56} $on><DisplayIc /><span>显示设置</span></LargeBtn>
                    <SmallCol $w={63} $ml={5}>
                        <SmallBtn><FullIc /><BtnText $ml={1}>全屏</BtnText></SmallBtn>
                        <SmallBtn><ZoomIc /><BtnText $ml={1}>缩放</BtnText><Caret $ml={5} /></SmallBtn>
                        <SmallBtn><PanIc /><BtnText>平移</BtnText><Caret $ml={5} /></SmallBtn>
                    </SmallCol>
                    <SmallCol $w={110}>
                        <SmallBtn><RotateIc /><span>顺旋转90°</span><Caret $ml={5} /></SmallBtn>
                        <SmallBtn><ShowSelIc /><span>显示选中图元</span><Caret $ml={6} /></SmallBtn>
                        <SmallBtn><LocalIc /><span>局部三维</span></SmallBtn>
                    </SmallCol>
                </GroupBody>
                <GroupLabel>操作</GroupLabel>
            </Group>
            <Group $w={168}>
                <GroupBody $pl={5}>
                    <SmallCol $w={80}>
                        <SmallBtn $on $w={65} $pl={3}><NavTreeIc /><span>导航树</span></SmallBtn>
                        <SmallBtn $on $w={77} $pl={3}><CompListIc /><span>构件列表</span></SmallBtn>
                        <SmallBtn $on $w={53} $pl={3}><PropIc /><span>属性</span></SmallBtn>
                    </SmallCol>
                    <SmallCol $w={76}>
                        <SmallBtn $on $pl={3}><DrawMgrIc /><span>图纸管理</span></SmallBtn>
                        <SmallBtn $on $pl={3}><LayerMgrIc /><span>图层管理</span></SmallBtn>
                        <SmallBtn $pl={2}><RestoreIc /><span>恢复默认</span></SmallBtn>
                    </SmallCol>
                </GroupBody>
                <GroupLabel>用户面板</GroupLabel>
            </Group>
        </Ribbon>

        <DropBar>
            {['首层', '梁', '梁', 'KL-1', '分层1'].map((d, i) => <Drop key={i}>{d}<Caret $c="#666" /></Drop>)}
        </DropBar>

        <Main>
            <NavPanel>
                <Strip><CloseSmall /></Strip>
                <PanelTitle>导航树</PanelTitle>
                <Toolbar>
                    <Svg w={14} h={12}><path d="M9 0v6 M6 3h6 M3 5v6 M0 8h6" stroke="#3f86dc" strokeWidth="2" /></Svg>
                    <NavSwitch $ml={135}>
                        <Svg w={14} h={13}><path d="M1 1h2v2H1z M1 5.500h2v2H1z M1 10h2v2H1z M6 2h8 M6 6.500h8 M6 11h8" stroke="#4a90e2" /></Svg>
                    </NavSwitch>
                    <NavSwitch $ml={4}>
                        <Svg w={16} h={13}><rect x=".5" y=".5" width="15" height="12" stroke="#4a90e2" /><rect width="16" height="4" fill="#4a90e2" /><path d="M3 7h10 M3 10h7" stroke="#4a90e2" /></Svg>
                    </NavSwitch>
                </Toolbar>
                <NavTree>
                    {navItems.map(n => <NavRow key={n}><FolderIc />{n}</NavRow>)}
                    <NavRow><FolderIc open />梁</NavRow>
                    <NavChild><NavChildInner $on><FunnelIc />梁(L)</NavChildInner></NavChild>
                    <NavChild><NavChildInner><LintelIc />连梁(G)</NavChildInner></NavChild>
                    <NavChild><NavChildInner><RingIc />圈梁(E)</NavChildInner></NavChild>
                    {navItems2.map(n => <NavRow key={n}><FolderIc />{n}</NavRow>)}
                </NavTree>
            </NavPanel>

            <MidCol>
                <Panel $h={479}>
                    <Strip><CloseSmall /></Strip>
                    <TabsBar>
                        <PanelTab $on>构件列表</PanelTab>
                        <PanelTab>图纸管理</PanelTab>
                    </TabsBar>
                    <Toolbar $gap={7} $pl={5}>
                        <ToolBtn><NewIc />新建<Caret $ml={1} /></ToolBtn>
                        <ToolBtn><PageIc />复制</ToolBtn>
                        <ToolBtn><DeleteIc />删除</ToolBtn>
                        <ToolBtn><Svg w={15} h={15}><rect x="4" y="1" width="10" height="10" fill="#cfe0f6" stroke={B} /><path d="M2 5v9h9" stroke="#d98b52" /></Svg>层间复制</ToolBtn>
                        <MoreArrows>▸▸</MoreArrows>
                    </Toolbar>
                    <SearchRow>搜索构件...<MagIc c="#4a9be8" /></SearchRow>
                    <CompTree>
                        <CompRow $pl={10}><TreeArrow />梁</CompRow>
                        <CompRow $pl={30}><TreeArrow />楼层框架梁</CompRow>
                        {klRows.map((k, i) => <CompRow key={k} $pl={60}><LeafLabel $on={i === 0}>{k}</LeafLabel></CompRow>)}
                        <CompRow $pl={30}><TreeArrow />非框架梁</CompRow>
                        {['L-1', 'L-2', 'L-3', 'L-4', 'L-5'].map(k => <CompRow key={k} $pl={60}><LeafLabel>{k}</LeafLabel></CompRow>)}
                    </CompTree>
                    <ScrollThumb $r={3} $t={98} $h={183} />
                </Panel>
                <Panel $h={360}>
                    <Strip><CloseSmall /></Strip>
                    <TabsBar>
                        <PanelTab $on>属性列表</PanelTab>
                        <PanelTab>图层管理</PanelTab>
                    </TabsBar>
                    <AttrHead><div /><div>属性名称</div><div>属性值</div><div>附加</div></AttrHead>
                    {attrs.map((a, i) => (
                        <AttrRow key={a.n}>
                            <NumCell>{i + 1}</NumCell>
                            <NameCell $blue={a.blue}>{a.n}</NameCell>
                            <ValueCell>{a.v}</ValueCell>
                            <CheckCell>{!a.none && <CheckBox />}</CheckCell>
                        </AttrRow>
                    ))}
                    <ScrollThumb $r={3} $t={49} $h={153} />
                </Panel>
            </MidCol>

            <Splitter $w={5}><SplitHandle /></Splitter>

            <Viewport>
                <Scene />
                <Overlay />
                <FloatTools />
            </Viewport>

            <Splitter $w={4}><SplitHandle /></Splitter>

            <RightPanel>
                <Strip><CloseSmall /></Strip>
                <PanelTitle>显示设置</PanelTitle>
                <RightTabs>
                    <RightTab $on>图元显示</RightTab>
                    <RightTab>楼层显示</RightTab>
                </RightTabs>
                <LayerTable>
                    <LayerHead>
                        <HeadCell>图层构件</HeadCell>
                        <HeadCell $on>显示图元</HeadCell>
                        <HeadCell>显示名称</HeadCell>
                    </LayerHead>
                    {layers.map((l, i) => (
                        <LayerRow key={i}>
                            <LayerName $group={l.g} $last={l.last}>{l.g && <Collapse />}{l.t}</LayerName>
                            <LayerCheck $focus={l.focus}><CheckBox state={l.c} /></LayerCheck>
                            <LayerCheck><CheckBox /></LayerCheck>
                        </LayerRow>
                    ))}
                    <ScrollThumb $r={3} $t={346} $h={186} />
                </LayerTable>
                <PanelFoot><ResetBtn>恢复默认设置</ResetBtn></PanelFoot>
            </RightPanel>
        </Main>

        <StatusBar>
            <CoordText $w={265} $pl={2}>X = -519 Y = -10808 Z = 5071</CoordText>
            <StatusText $w={83}>层高：&nbsp;8.1</StatusText>
            <StatusText $w={136}>标高：&nbsp;0~8.1</StatusText>
            <StatusText $w={101}>0</StatusText>
            <StatusText $w={102}>隐藏：&nbsp;0</StatusText>
            <StatusBtn $w={25}><Svg w={12} h={14}><path d="M2 0v12h10 M2 7h5v5" stroke="#444" /></Svg></StatusBtn>
            <StatusBtn $w={36} $on $mr={6}><Svg w={14} h={18}><rect x=".5" y="3.500" width="12" height="14" stroke="#4a97e8" /><rect x="0" y="0" width="5" height="6" fill="#f0a050" /></Svg><Caret $c="#555" /></StatusBtn>
            <StatusBtn $w={25} $mr={6}><Svg w={14} h={18}><path d="M2 1l10 16 M12 1L2 17" stroke="#444" /></Svg></StatusBtn>
            <StatusBtn $w={35} $mr={4}><Svg w={14} h={14}><path d="M1 12h12 M1 12L10 2 M6 6l2 6" stroke="#444" /></Svg><Caret $c="#777" /></StatusBtn>
            <StatusBtn $w={36} $mr={3}><Svg w={16} h={14}><path d="M1 4h6 M4 1v6" stroke="#444" /><rect x="6" y="8" width="8" height="5" fill="#444" /></Svg><Caret $c="#777" /></StatusBtn>
            <StatusBtn $w={72}>跨图层选择</StatusBtn>
            <StatusBtn $w={60} $mr={6}>折线选择</StatusBtn>
            <StatusText $w={830}>按鼠标左键指定第一个角点，或拾取构件图元</StatusText>
            <StatusText $w={60}>250 FPS</StatusText>
        </StatusBar>

        <Taskbar>
            <TaskItem $w={47}>{TaskIcons.win}</TaskItem>
            <TaskItem $w={49}>{TaskIcons.circle}</TaskItem>
            <TaskItem $w={48}>{TaskIcons.view}</TaskItem>
            <TaskItem $w={40} $ml={7} $run>{TaskIcons.edge}</TaskItem>
            <TaskItem $w={40} $ml={9} $run>{TaskIcons.folder}</TaskItem>
            <TaskItem $w={40} $ml={9}>{TaskIcons.store}</TaskItem>
            <TaskItem $w={40} $ml={9} $run>{TaskIcons.wechat}</TaskItem>
            <TaskItem $w={40} $ml={9} $run>{TaskIcons.cad}</TaskItem>
            <TaskItem $w={47} $ml={5} $run $on>{TaskIcons.t}</TaskItem>
            <Tray>
                <TrayText $mr={6}>桌面</TrayText>
                <TrayText $mr={12} $mt={-18}>»</TrayText>
                <Svg w={12} h={8}><path d="M1 7l5-6 5 6" stroke="#ddd" strokeWidth="1.200" /></Svg>
                <TraySpace $w={42} />
                <Svg w={14} h={14}><path d="M1 13A12 12 0 0 1 13 1 M5 13a8 8 0 0 1 8-8 M9 13a4 4 0 0 1 4-4" stroke="#aaa" /></Svg>
                <TrayText $mr={14} $ml={7} $fs={14}>中</TrayText>
                <PinYin>拼</PinYin>
                <Clock>7:34<br />2021/3/12</Clock>
                <Svg w={16} h={18}><path d="M1 1h14v12h-6l-1 3-1-3H1z" stroke="#ddd" /></Svg>
                <TraySpace $w={25} />
            </Tray>
        </Taskbar>
    </Page>
)

export default App
